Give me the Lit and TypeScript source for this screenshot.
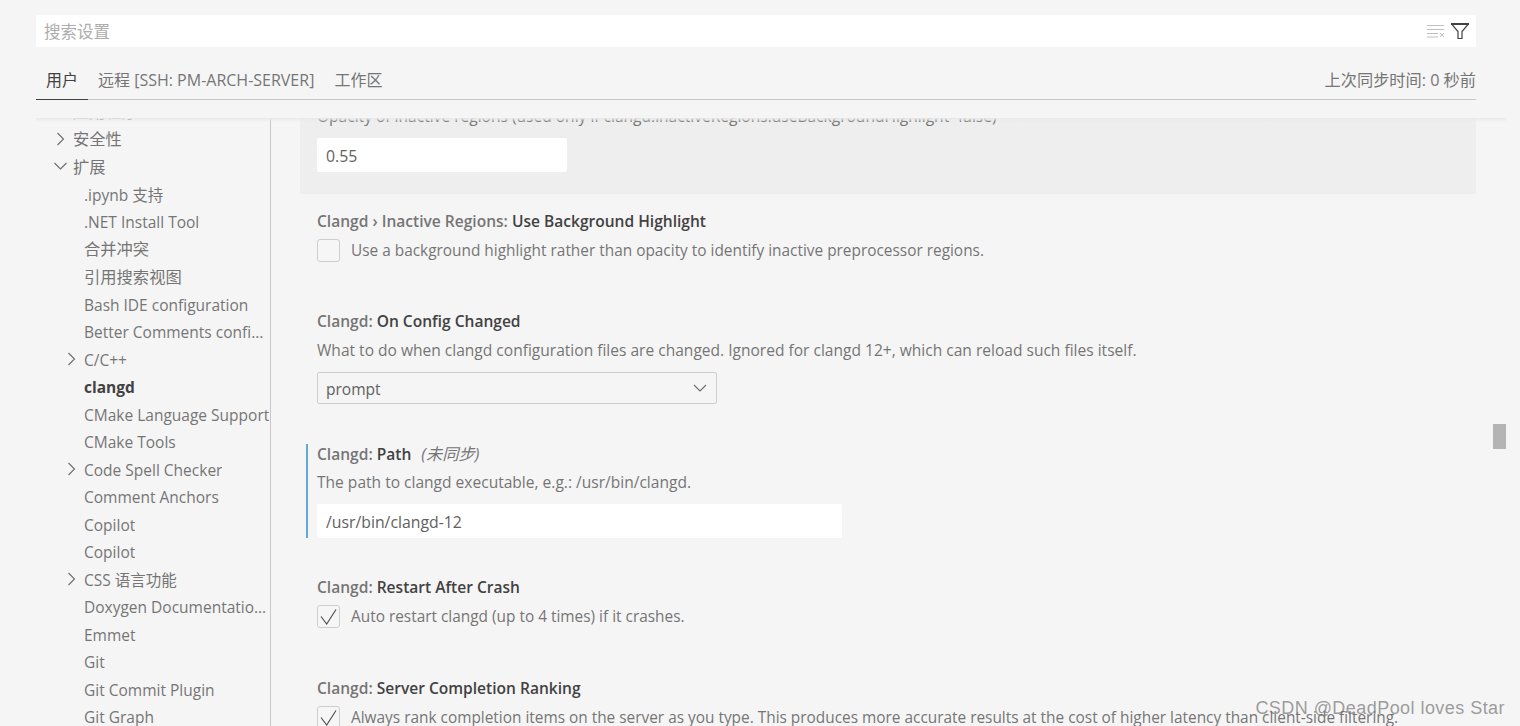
import { LitElement, html, css, svg } from "lit";
import { customElement } from "lit/decorators.js";

type Row = { t: string; l: 1 | 2; c?: "r" | "d"; b?: boolean; z?: boolean };
const rows: Row[] = [
  { t: "应用程序", l: 1, z: true },
  { t: "安全性", l: 1, c: "r", z: true },
  { t: "扩展", l: 1, c: "d", z: true },
  { t: ".ipynb 支持", l: 2 },
  { t: ".NET Install Tool", l: 2 },
  { t: "合并冲突", l: 2, z: true },
  { t: "引用搜索视图", l: 2, z: true },
  { t: "Bash IDE configuration", l: 2 },
  { t: "Better Comments configuration", l: 2 },
  { t: "C/C++", l: 2, c: "r" },
  { t: "clangd", l: 2, b: true },
  { t: "CMake Language Support", l: 2 },
  { t: "CMake Tools", l: 2 },
  { t: "Code Spell Checker", l: 2, c: "r" },
  { t: "Comment Anchors", l: 2 },
  { t: "Copilot", l: 2 },
  { t: "Copilot", l: 2 },
  { t: "CSS 语言功能", l: 2, c: "r" },
  { t: "Doxygen Documentation Generator", l: 2 },
  { t: "Emmet", l: 2 },
  { t: "Git", l: 2 },
  { t: "Git Commit Plugin", l: 2 },
  { t: "Git Graph", l: 2 },
];

const chevR = svg`<path d="M2.5 1 L8.5 7 L2.5 13" fill="none" stroke="#6c6c6c" stroke-width="1.1"/>`;
const chevD = svg`<path d="M0.5 3 L6.5 9 L12.5 3" fill="none" stroke="#6c6c6c" stroke-width="1.1"/>`;
const check = html`<svg class="tick" width="23" height="23" viewBox="0 0 23 23"><path d="M4 11.5 L9.7 19 L19 4.5" fill="none" stroke="#4a4a4a" stroke-width="1.1"/></svg>`;

@customElement("app-root")
export class AppRoot extends LitElement {
  static styles = css`
    :host {
      display: block;
      position: relative;
      height: 726px;
      overflow: hidden;
      background: #f5f5f5;
      font-family: "Open Sans", "Noto Sans CJK SC", sans-serif;
      font-size: 15.55px;
      color: #757575;
    }
    .page { display: flex; flex-direction: column; height: 726px; padding: 15px 44px 0 36px; box-sizing: border-box; }
    header { flex: none; height: 103px; position: relative; z-index: 2; background: #f5f5f5; }
    .search {
      height: 32px; background: #fff; border-radius: 2px; display: flex; align-items: center;
      padding: 0 7px 0 8px; color: #adadad; font-size: 16.5px;
    }
    .search span { flex: 1; }
    .search svg { display: block; margin-left: 6px; }
    .tabs {
      margin-top: 18px; height: 34px; border-bottom: 1px solid #c8c8c8; display: flex; align-items: stretch;
      font-size: 16px; color: #757575;
    }
    .tab { padding: 3px 10px 0; line-height: 24px; }
    .tab.active { color: #424242; border-bottom: 1px solid #424242; margin-bottom: -1px; }
    .sync { margin-left: auto; line-height: 24px; padding-top: 3px; font-size: 16.2px; }
    .shade {
      position: absolute; left: 36px; top: 118px; width: 1470px; height: 4px; z-index: 3;
      background: linear-gradient(#e9e9e9, #f5f5f500);
    }
    .body { flex: 1; display: flex; min-height: 0; overflow: hidden; }
    nav { flex: none; width: 234px; border-right: 1px solid #c8c8c8; overflow: hidden; font-size: 15.5px; }
    .list { margin-top: -20px; }
    .row { height: 27.5px; display: flex; align-items: center; white-space: nowrap; box-sizing: border-box; }
    .row.l1 { padding-left: 16px; }
    .row.l2 { padding-left: 27px; }
    .row.z .label { font-size: 16.3px; margin-top: -3px; }
    .chev { flex: none; width: 21px; height: 14px; }
    .chev svg { display: block; }
    .row.d .chev svg { margin-left: 2px; }
    .row.r .chev svg { margin-left: 3px; }
    .label { overflow: hidden; text-overflow: ellipsis; min-width: 0; padding-top: 1px; }
    .row.b .label { font-weight: 700; color: #424242; }
    main { flex: 1; min-width: 0; padding-left: 29px; overflow: hidden; }
    .modified {
      margin-top: -17px; background: #eeeeee; height: 93px; padding-left: 17px; box-sizing: border-box;
    }
    .setting { padding-left: 17px; position: relative; }
    .modified .desc { line-height: 20px; padding-top: 5px; }
    .title { font-weight: 600; color: #757575; line-height: 20px; white-space: nowrap; }
    .title b { font-weight: 600; color: #424242; }
    .title i { font-weight: 400; font-style: italic; margin-left: 6px; color: #757575; font-size: 16.3px; }
    .desc { line-height: 20px; white-space: nowrap; }
    .check { display: flex; align-items: center; gap: 11px; margin-top: 8px; height: 23px; white-space: nowrap; font-size: 15.4px; }
    .check span { margin-top: -1px; }
    .box { flex: none; width: 21px; height: 21px; border: 1px solid #cecece; border-radius: 3px; background: #f6f6f6; }
    .tick { display: block; margin: -1px; }
    .input {
      background: #fff; height: 34px; border-radius: 2px; display: flex; align-items: center;
      padding: 2px 0 0 9px; color: #616161; box-sizing: border-box; font-size: 15.8px;
    }
    .select {
      width: 400px; height: 32px; margin-top: 12px; border: 1px solid #cecece; border-radius: 2px; box-sizing: border-box;
      display: flex; align-items: center; justify-content: space-between; padding: 0 9px 0 8px; color: #616161;
    }
    .select span { padding-top: 2px; }
    .select svg { display: block; }
    .s1 { margin-top: 17px; }
    .s2 { margin-top: 49px; }
    .s3 { margin-top: 40px; }
    .s3::before { content: ""; position: absolute; left: 6px; top: 0; bottom: 0; width: 2px; background: #62a9d8; }
    .s5 { margin-top: 39px; }
    .s6 { margin-top: 50px; }
    .in1 { width: 250px; margin-top: 12px; }
    .in2 { width: 525px; margin-top: 12px; }
    .s2 .desc { margin-top: 9px; }
    .s3 .desc { margin-top: 8px; }
    .thumb { position: absolute; left: 1493px; top: 424px; width: 13px; height: 25px; background: #b4b4b4; }
    .mark {
      position: absolute; right: 15px; top: 698px; font-family: "Liberation Sans", sans-serif; font-size: 18px;
      color: rgba(110, 110, 110, 0.68); letter-spacing: 0.45px; white-space: nowrap;
    }
  `;

  render() {
    return html`
      <div class="page">
        <header>
          <div class="search">
            <span>搜索设置</span>
            <svg width="18" height="14" viewBox="0 0 18 14"><path d="M0 1.5H17M0 5.5H17M0 9.5H11M0 13H11" stroke="#c0c0c0" stroke-width="1" fill="none"/><path d="M13 9l4 4M17 9l-4 4" stroke="#c0c0c0" fill="none"/></svg>
            <svg width="18" height="16" viewBox="0 0 18 16"><path d="M0.5 1 H17.5 L11 8.5 V15.5 H7 V8.5 Z" fill="none" stroke="#424242" stroke-width="1.2"/><path d="M0 1H18" stroke="#424242" stroke-width="2"/></svg>
          </div>
          <div class="tabs">
            <div class="tab active">用户</div>
            <div class="tab">远程 [SSH: PM-ARCH-SERVER]</div>
            <div class="tab">工作区</div>
            <div class="sync">上次同步时间: 0 秒前</div>
          </div>
        </header>
        <div class="body">
          <nav>
            <div class="list">
              ${rows.map(
                (r) => html`<div class="row l${r.l} ${r.c ?? ""} ${r.b ? "b" : ""} ${r.z ? "z" : ""}">
                  <div class="chev">
                    ${r.c === "r" ? html`<svg width="12" height="14" viewBox="0 0 12 14">${chevR}</svg>` : ""}
                    ${r.c === "d" ? html`<svg width="13" height="14" viewBox="0 0 13 14">${chevD}</svg>` : ""}
                  </div>
                  <div class="label">${r.t}</div>
                </div>`
              )}
            </div>
          </nav>
          <main>
            <div class="modified">
              <div class="desc">Opacity of inactive regions (used only if clangd.inactiveRegions.useBackgroundHighlight=false)</div>
              <div class="input in1">0.55</div>
            </div>
            <div class="setting s1">
              <div class="title">Clangd › Inactive Regions: <b>Use Background Highlight</b></div>
              <div class="check"><div class="box"></div><span>Use a background highlight rather than opacity to identify inactive preprocessor regions.</span></div>
            </div>
            <div class="setting s2">
              <div class="title">Clangd: <b>On Config Changed</b></div>
              <div class="desc">What to do when clangd configuration files are changed. Ignored for clangd 12+, which can reload such files itself.</div>
              <div class="select"><span>prompt</span>
                <svg width="14" height="8" viewBox="0 0 14 8"><path d="M1 1 L7 7 L13 1" fill="none" stroke="#6c6c6c" stroke-width="1.1"/></svg>
              </div>
            </div>
            <div class="setting s3">
              <div class="title">Clangd: <b>Path</b> <i>(未同步)</i></div>
              <div class="desc">The path to clangd executable, e.g.: /usr/bin/clangd.</div>
              <div class="input in2">/usr/bin/clangd-12</div>
            </div>
            <div class="setting s5">
              <div class="title">Clangd: <b>Restart After Crash</b></div>
              <div class="check"><div class="box">${check}</div><span>Auto restart clangd (up to 4 times) if it crashes.</span></div>
            </div>
            <div class="setting s6">
              <div class="title">Clangd: <b>Server Completion Ranking</b></div>
              <div class="check"><div class="box">${check}</div><span>Always rank completion items on the server as you type. This produces more accurate results at the cost of higher latency than client-side filtering.</span></div>
            </div>
          </main>
        </div>
      </div>
      <div class="shade"></div>
      <div class="thumb"></div>
      <div class="mark">CSDN @DeadPool loves Star</div>
    `;
  }
}
